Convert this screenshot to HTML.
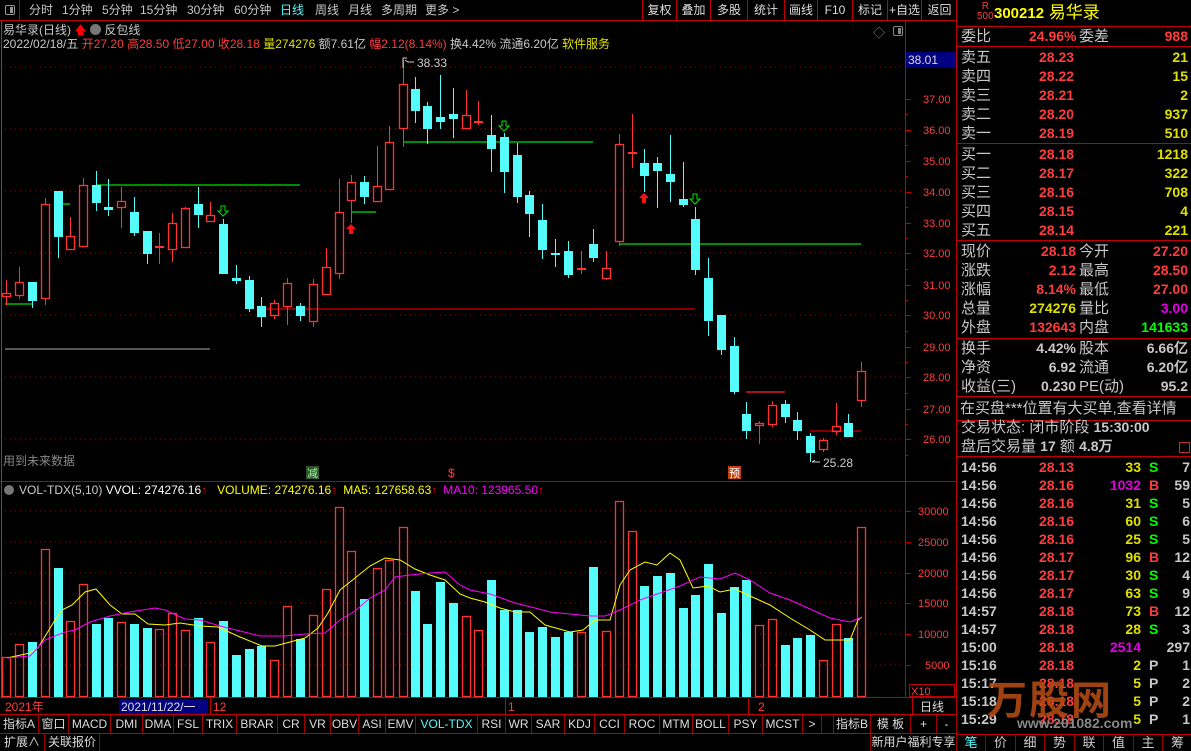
<!DOCTYPE html>
<html><head><meta charset="utf-8"><style>
*{margin:0;padding:0;box-sizing:border-box}
html,body{width:1191px;height:751px;overflow:hidden}
body{background:#000;position:relative;font-family:"Liberation Sans","Noto Sans CJK SC",sans-serif;color:#c8c8c8}
.a{position:absolute;white-space:nowrap}
.t{font-size:12px;line-height:20px;top:0}
.rp{position:absolute;left:957px;width:234px;font-size:15px}
.row{position:absolute;left:0;width:234px;height:19px;line-height:19px;white-space:nowrap}
.row span{position:absolute;top:0}
.num{font-family:"Liberation Sans",sans-serif;font-weight:bold;font-size:14px}
.red{color:#ff3c3c}.yel{color:#e0e000}.grn{color:#00ff00}.mag{color:#e000e0}.gry{color:#c8c8c8}
.tab{position:absolute;top:715px;height:18px;line-height:18px;font-size:12px;text-align:center;border-right:1px solid #a00000;color:#ddd;white-space:nowrap;overflow:hidden}
.btn{position:absolute;top:0;height:20px;line-height:20px;font-size:12px;text-align:center;border-left:1px solid #c00000;color:#ddd;white-space:nowrap}
.hl{position:absolute;height:1px;background:#c00000}
</style></head><body>

<!-- top bar -->
<div class="a" style="left:0;top:0;width:20px;height:20px;border-right:1px solid #c00000"></div>
<div class="a" style="left:5px;top:5px;width:10px;height:10px;border:1px solid #999;border-radius:2px"><div style="position:absolute;right:1px;top:1px;width:3px;height:6px;background:#999"></div></div>
<div class="a t" style="left:29px">分时</div>
<div class="a t" style="left:62px">1分钟</div>
<div class="a t" style="left:102px">5分钟</div>
<div class="a t" style="left:140px">15分钟</div>
<div class="a t" style="left:187px">30分钟</div>
<div class="a t" style="left:234px">60分钟</div>
<div class="a t" style="left:280px;color:#54fcfc">日线</div>
<div class="a t" style="left:315px">周线</div>
<div class="a t" style="left:348px">月线</div>
<div class="a t" style="left:381px">多周期</div>
<div class="a t" style="left:425px">更多 &gt;</div>
<div class="btn" style="left:642px;width:34px">复权</div>
<div class="btn" style="left:676px;width:34px">叠加</div>
<div class="btn" style="left:710px;width:37px">多股</div>
<div class="btn" style="left:747px;width:37px">统计</div>
<div class="btn" style="left:784px;width:33px">画线</div>
<div class="btn" style="left:817px;width:35px">F10</div>
<div class="btn" style="left:852px;width:35px">标记</div>
<div class="btn" style="left:887px;width:34px">+自选</div>
<div class="btn" style="left:921px;width:36px">返回</div>
<div class="hl" style="left:0;top:20px;width:957px"></div>

<!-- chart info -->
<div class="a" style="left:3px;top:22px;font-size:12px;line-height:16px">易华录(日线) <span style="color:#f00">🡅</span> <span style="display:inline-block;width:11px;height:11px;border-radius:6px;background:#777;vertical-align:-1px"></span> 反包线</div>
<div class="a" style="left:3px;top:36px;font-size:12px;line-height:16px">2022/02/18/五 <span class="red">开27.20 高28.50 低27.00 收28.18</span> <span class="yel">量274276</span> 额7.61亿 <span class="red">幅2.12(8.14%)</span> 换4.42% 流通6.20亿 <span class="yel">软件服务</span></div>
<div class="a" style="left:873px;top:24px;color:#888;font-size:12px">◇</div>
<div class="a" style="left:893px;top:26px;width:10px;height:10px;border:1px solid #888;border-radius:2px"><div style="position:absolute;right:1px;top:1px;width:3px;height:6px;background:#888"></div></div>

<svg class="a" style="left:0;top:0" width="957" height="751" id="ch">
<g stroke="#b00000" stroke-dasharray="1,4" stroke-width="1">
<line x1="5" y1="67" x2="905" y2="67"/><line x1="5" y1="129" x2="905" y2="129"/><line x1="5" y1="191" x2="905" y2="191"/><line x1="5" y1="253" x2="905" y2="253"/><line x1="5" y1="315" x2="905" y2="315"/><line x1="5" y1="377" x2="905" y2="377"/><line x1="5" y1="439" x2="905" y2="439"/>
<line x1="5" y1="511" x2="905" y2="511"/><line x1="5" y1="542" x2="905" y2="542"/><line x1="5" y1="573" x2="905" y2="573"/><line x1="5" y1="603" x2="905" y2="603"/><line x1="5" y1="634" x2="905" y2="634"/><line x1="5" y1="665" x2="905" y2="665"/>
</g>
<line x1="905.5" y1="21" x2="905.5" y2="697" stroke="#c00000"/>
<line x1="0" y1="481.5" x2="957" y2="481.5" stroke="#c00000"/>
<line x1="0" y1="697.5" x2="957" y2="697.5" stroke="#c00000"/>
<line x1="0" y1="714.5" x2="957" y2="714.5" stroke="#c00000"/>
<line x1="0" y1="733.5" x2="957" y2="733.5" stroke="#c00000"/>
<line x1="956.5" y1="0" x2="956.5" y2="751" stroke="#c00000"/>
<line x1="1.5" y1="21" x2="1.5" y2="697" stroke="#555"/>
<g id="ticks" stroke="#c00000"></g>
<g font-size="11" fill="#ff3c3c" font-family="Liberation Sans">
<text x="923" y="103">37.00</text><text x="923" y="134">36.00</text><text x="923" y="165">35.00</text><text x="923" y="196">34.00</text><text x="923" y="227">33.00</text><text x="923" y="257">32.00</text><text x="923" y="289">31.00</text><text x="923" y="319">30.00</text><text x="923" y="351">29.00</text><text x="923" y="381">28.00</text><text x="923" y="413">27.00</text><text x="923" y="443">26.00</text>
<text x="918" y="515">30000</text><text x="918" y="546">25000</text><text x="918" y="577">20000</text><text x="918" y="607">15000</text><text x="918" y="638">10000</text><text x="925" y="669">5000</text>
</g>
<rect x="906" y="52" width="50" height="16" fill="#000080"/>
<text x="908" y="64" font-size="12" fill="#ddd">38.01</text>
<rect x="909.5" y="684.5" width="45" height="12" fill="none" stroke="#c00000"/>
<text x="911" y="695" font-size="11" fill="#ff3c3c">X10</text>

<g stroke-width="1.3">
<line x1="96" y1="185" x2="300" y2="185" stroke="#00e000"/>
<line x1="5" y1="304" x2="32" y2="304" stroke="#00e000"/>
<line x1="57" y1="204" x2="70" y2="204" stroke="#00e000"/>
<line x1="261" y1="309" x2="695" y2="309" stroke="#d00000"/>
<line x1="5" y1="349" x2="210" y2="349" stroke="#888"/>
<line x1="351" y1="212" x2="376" y2="212" stroke="#00e000"/>
<line x1="403" y1="142" x2="593" y2="142" stroke="#00e000"/>
<line x1="619" y1="244" x2="861" y2="244" stroke="#00e000"/>
<line x1="746" y1="392" x2="785" y2="392" stroke="#ff2020"/>
<line x1="810" y1="431" x2="861" y2="431" stroke="#d00000"/>
</g>
<g id="cand"></g>
<g id="vol"></g>
<polyline fill="none" stroke="#ffff00" stroke-width="1" points="7,658 30,653 38,648 55,620 62,610 72,605 85,592 96,589 110,605 122,614 135,614 148,624 165,625 180,623 200,626 218,627 240,637 262,646 275,646 290,642 305,638 318,628 328,613 340,590 355,578 370,566 385,558 400,560 415,569 430,575 445,580 460,594 470,598 485,602 500,608 515,612 530,612 545,625 570,632 583,630 595,620 610,620 620,585 630,570 645,562 657,565 670,553 680,560 693,588 708,586 720,592 735,589 750,596 770,605 790,618 810,630 825,640 850,640 858,620 862,617"/>
<polyline fill="none" stroke="#ff00ff" stroke-width="1" points="7,658 30,656 45,640 65,632 75,630 90,622 110,616 130,612 155,608 165,610 185,619 200,620 220,626 240,631 260,636 285,636 305,634 325,633 340,620 355,611 370,598 385,590 395,577 410,575 430,573 445,572 460,585 470,590 490,594 515,603 535,608 550,612 590,616 605,616 620,610 640,600 660,593 680,586 700,577 720,579 735,573 750,580 770,593 790,600 810,609 830,618 850,622 862,617"/>

<path d="M351,224 l-5,5 h3 v5 h4 v-5 h3 z" fill="#ff1010"/>
<path d="M644,193 l-5,5 h3 v5 h4 v-5 h3 z" fill="#ff1010"/>
<g fill="none" stroke="#00e000"><path d="M221,206 h4 v5 h3 l-5,5 l-5,-5 h3 z"/><path d="M502,121 h4 v5 h3 l-5,5 l-5,-5 h3 z"/><path d="M693,194 h4 v5 h3 l-5,5 l-5,-5 h3 z"/></g>
<path d="M403,68 v-10 h4 M405,60 l3,2 h6" stroke="#ccc" fill="none"/>
<text x="417" y="67" font-size="12" fill="#ccc">38.33</text>
<path d="M812,462 h8 M812,462 l3,-2" stroke="#ccc" fill="none"/>
<text x="823" y="467" font-size="12" fill="#ccc">25.28</text>
<text x="3" y="465" font-size="12" fill="#888">用到未来数据</text>
<rect x="306" y="466" width="13" height="13" fill="#305030"/><text x="307" y="477" font-size="11" fill="#9f9">减</text>
<text x="448" y="477" font-size="12" fill="#ff3c3c">$</text>
<rect x="728" y="466" width="13" height="13" fill="#c04010"/><text x="729" y="477" font-size="11" fill="#fff">预</text>

<circle cx="9" cy="490" r="5" fill="#777"/>
<text x="19" y="494" font-size="12" fill="#ccc">VOL-TDX(5,10) <tspan fill="#fff">VVOL: 274276.16</tspan><tspan fill="#f00">↑</tspan><tspan fill="#ffff00" dx="10">VOLUME: 274276.16</tspan><tspan fill="#f00">↑</tspan><tspan fill="#ffff00" dx="6">MA5: 127658.63</tspan><tspan fill="#f00">↑</tspan><tspan fill="#ff00ff" dx="6">MA10: 123965.50</tspan><tspan fill="#f00">↑</tspan></text>

<text x="5" y="711" font-size="12" fill="#ff3c3c">2021年</text>
<rect x="119" y="699" width="89" height="15" fill="#000080"/>
<text x="121" y="711" font-size="12" fill="#ddd">2021/11/22/一</text>
<line x1="210.5" y1="698" x2="210.5" y2="714" stroke="#c00000"/>
<text x="213" y="711" font-size="12" fill="#ff3c3c">12</text>
<line x1="505.5" y1="698" x2="505.5" y2="714" stroke="#c00000"/>
<text x="508" y="711" font-size="12" fill="#ff3c3c">1</text>
<line x1="748.5" y1="698" x2="748.5" y2="714" stroke="#c00000"/>
<text x="758" y="711" font-size="12" fill="#ff3c3c">2</text>
<line x1="912.5" y1="698" x2="912.5" y2="714" stroke="#c00000"/>
<text x="920" y="711" font-size="12" fill="#ddd">日线</text>
</svg>

<div class="tab" style="left:0;width:39px">指标A</div>
<div class="tab" style="left:39px;width:30px">窗口</div>
<div class="tab" style="left:69px;width:42px">MACD</div>
<div class="tab" style="left:111px;width:32px">DMI</div>
<div class="tab" style="left:143px;width:31px">DMA</div>
<div class="tab" style="left:174px;width:29px">FSL</div>
<div class="tab" style="left:203px;width:34px">TRIX</div>
<div class="tab" style="left:237px;width:41px">BRAR</div>
<div class="tab" style="left:278px;width:27px">CR</div>
<div class="tab" style="left:305px;width:26px">VR</div>
<div class="tab" style="left:331px;width:28px">OBV</div>
<div class="tab" style="left:359px;width:27px">ASI</div>
<div class="tab" style="left:386px;width:30px">EMV</div>
<div class="tab" style="left:416px;width:62px;color:#54fcfc">VOL-TDX</div>
<div class="tab" style="left:478px;width:28px">RSI</div>
<div class="tab" style="left:506px;width:26px">WR</div>
<div class="tab" style="left:532px;width:33px">SAR</div>
<div class="tab" style="left:565px;width:30px">KDJ</div>
<div class="tab" style="left:595px;width:30px">CCI</div>
<div class="tab" style="left:625px;width:35px">ROC</div>
<div class="tab" style="left:660px;width:33px">MTM</div>
<div class="tab" style="left:693px;width:36px">BOLL</div>
<div class="tab" style="left:729px;width:34px">PSY</div>
<div class="tab" style="left:763px;width:40px">MCST</div>
<div class="tab" style="left:803px;width:19px">&gt;</div>
<div class="tab" style="left:833px;width:38px;border-left:1px solid #a00000">指标B</div>
<div class="tab" style="left:871px;width:40px">模 板</div>
<div class="tab" style="left:911px;width:26px">+</div>
<div class="tab" style="left:937px;width:20px">-</div>
<div class="tab" style="left:0;top:734px;width:45px;height:17px;line-height:17px">扩展∧</div>
<div class="tab" style="left:45px;top:734px;width:55px;height:17px;line-height:17px">关联报价</div>
<div class="tab" style="left:870px;top:734px;width:87px;height:17px;line-height:17px;border-left:1px solid #a00000">新用户福利专享</div>

<div class="rp" style="top:0;height:751px">
<div class="a" style="left:20px;top:2px;font-size:10px;color:#ff3c3c;line-height:10px;text-align:center">R<br>500</div>
<div class="a" style="left:37px;top:2px;font-size:17px;color:#ffff00;line-height:22px"><b style="font-size:15px">300212</b> 易华录</div>
<div class="hl" style="left:0;top:26px;width:234px"></div>
<div class="row" style="top:27px"><span style="left:4px">委比</span><span class="num red" style="left:72px">24.96%</span><span style="left:122px">委差</span><span class="num red" style="right:3px">988</span></div>
<div class="hl" style="left:0;top:46px;width:234px"></div>
<div id="ob"></div>
<div class="hl" style="left:0;top:143px;width:234px"></div>
<div class="hl" style="left:0;top:240px;width:234px"></div>
<div class="row" style="top:242px"><span style="left:4px">现价</span><span class="num red" style="right:115px">28.18</span><span style="left:122px">今开</span><span class="num red" style="right:3px">27.20</span></div>
<div class="row" style="top:261px"><span style="left:4px">涨跌</span><span class="num red" style="right:115px">2.12</span><span style="left:122px">最高</span><span class="num red" style="right:3px">28.50</span></div>
<div class="row" style="top:280px"><span style="left:4px">涨幅</span><span class="num red" style="right:115px">8.14%</span><span style="left:122px">最低</span><span class="num red" style="right:3px">27.00</span></div>
<div class="row" style="top:299px"><span style="left:4px">总量</span><span class="num yel" style="right:115px">274276</span><span style="left:122px">量比</span><span class="num mag" style="right:3px">3.00</span></div>
<div class="row" style="top:318px"><span style="left:4px">外盘</span><span class="num red" style="right:115px">132643</span><span style="left:122px">内盘</span><span class="num grn" style="right:3px">141633</span></div>
<div class="hl" style="left:0;top:338px;width:234px"></div>
<div class="row" style="top:339px"><span style="left:4px">换手</span><span class="num" style="right:115px">4.42%</span><span style="left:122px">股本</span><span class="num" style="right:3px">6.66亿</span></div>
<div class="row" style="top:358px"><span style="left:4px">净资</span><span class="num" style="right:115px">6.92</span><span style="left:122px">流通</span><span class="num" style="right:3px">6.20亿</span></div>
<div class="row" style="top:377px"><span style="left:4px">收益(三)</span><span class="num" style="right:115px">0.230</span><span style="left:122px">PE(动)</span><span class="num" style="right:3px">95.2</span></div>
<div class="hl" style="left:0;top:396px;width:234px"></div>
<div class="row" style="top:399px"><span style="left:3px">在买盘***位置有大买单,查看详情</span></div>
<div class="hl" style="left:0;top:420px;width:234px"></div>
<div class="row" style="top:418px"><span style="left:4px">交易状态: 闭市阶段 <b class="num">15:30:00</b></span></div>
<div class="row" style="top:437px"><span style="left:4px">盘后交易量 <b class="num">17</b> 额 <b class="num">4.8万</b></span></div>
<div class="a" style="left:222px;top:442px;width:11px;height:11px;border:1px solid #c03030"></div>
<div class="hl" style="left:0;top:456px;width:234px"></div>
<div id="tk"></div>
<div class="a" style="left:30px;top:668px;font-size:40px;font-weight:bold;color:#b14a14;letter-spacing:2px;opacity:.9">万股网</div>
<div class="a" style="left:60px;top:715px;font-size:14px;font-weight:bold;color:#888">www.201082.com</div>
<div class="hl" style="left:0;top:734px;width:234px"></div>
<div id="bt"></div>
</div>

<script>
var N='http://www.w3.org/2000/svg';
function el(p,t,a){var e=document.createElementNS(N,t);for(var k in a)e.setAttribute(k,a[k]);p.appendChild(e);return e;}
var C=[[6,293,297,280,305,'r'],[19,282,296,267,299,'r'],[32,282,301,282,308,'c'],[45,204,299,198,305,'r'],[58,191,237,191,258,'c'],[70,236,250,217,250,'r'],[83,185,247,178,247,'r'],[96,185,203,171,211,'c'],[108,207,210,179,216,'c'],[121,201,208,187,228,'r'],[134,212,233,197,236,'c'],[147,231,254,231,264,'c'],[159,246,248,233,264,'r'],[172,223,250,213,262,'r'],[185,208,248,207,248,'r'],[198,204,215,187,228,'c'],[210,215,222,202,222,'r'],[223,224,274,219,274,'c'],[236,278,281,265,284,'c'],[249,280,309,276,312,'c'],[261,306,317,297,327,'c'],[274,303,316,300,319,'r'],[287,283,307,278,325,'r'],[300,306,316,303,321,'c'],[313,284,322,279,327,'r'],[326,267,295,248,295,'r'],[339,212,274,179,279,'r'],[351,182,201,175,223,'r'],[364,182,197,176,204,'c'],[377,186,202,146,202,'r'],[389,142,190,126,190,'r'],[403,84,129,60,147,'r'],[415,89,111,77,123,'c'],[427,106,129,102,144,'c'],[440,117,122,75,129,'c'],[453,114,119,88,138,'c'],[466,115,129,90,129,'r'],[478,121,122,101,125,'r'],[491,135,149,115,172,'c'],[504,137,172,133,193,'c'],[517,155,197,143,203,'c'],[529,195,214,191,237,'c'],[542,220,250,204,259,'c'],[555,253,254,239,267,'c'],[568,251,275,241,278,'c'],[581,268,270,251,274,'r'],[593,244,258,229,262,'c'],[606,268,279,251,280,'r'],[619,144,242,134,246,'r'],[632,152,153,114,168,'r'],[644,163,176,149,192,'c'],[657,163,171,157,208,'c'],[670,174,182,135,202,'c'],[683,199,205,162,207,'c'],[695,219,270,207,275,'c'],[708,278,321,258,336,'c'],[721,315,350,315,355,'c'],[734,346,392,337,394,'c'],[746,414,431,402,439,'c'],[759,423,426,421,444,'r'],[772,405,425,401,427,'r'],[785,404,417,400,423,'c'],[797,420,431,412,440,'c'],[810,436,453,433,462,'c'],[823,440,450,438,452,'r'],[836,426,432,403,435,'r'],[848,423,437,414,437,'c'],[861,371,401,362,407,'r']];
var g=document.getElementById('cand');
C.forEach(function(c){var x=c[0],col=c[5]=='r'?'#ff3232':'#54fcfc';
 if(c[5]=='r'){el(g,'line',{x1:x+.5,y1:c[3],x2:x+.5,y2:c[1],stroke:col});el(g,'line',{x1:x+.5,y1:c[2],x2:x+.5,y2:c[4],stroke:col});
  if(c[2]-c[1]<3)el(g,'rect',{x:x-4,y:c[1],width:9,height:2,fill:col});else el(g,'rect',{x:x-3.5,y:c[1]+.5,width:8,height:c[2]-c[1]-1,fill:'none',stroke:col,'stroke-width':1.3});}
 else{el(g,'line',{x1:x+.5,y1:c[3],x2:x+.5,y2:c[4],stroke:col});el(g,'rect',{x:x-4,y:c[1],width:9,height:Math.max(2,c[2]-c[1]),fill:col});}});
var V=[[6,657,'r'],[19,644,'r'],[32,642,'c'],[45,549,'r'],[58,568,'c'],[70,621,'r'],[83,584,'r'],[96,624,'c'],[108,618,'c'],[121,622,'r'],[134,624,'c'],[147,628,'c'],[159,629,'r'],[172,613,'r'],[185,630,'r'],[198,618,'c'],[210,642,'r'],[223,621,'c'],[236,655,'c'],[249,649,'c'],[261,646,'c'],[274,660,'r'],[287,606,'r'],[300,639,'c'],[313,615,'r'],[326,589,'r'],[339,507,'r'],[351,551,'r'],[364,599,'c'],[377,568,'r'],[389,560,'r'],[403,527,'r'],[415,591,'c'],[427,624,'c'],[440,582,'c'],[453,603,'c'],[466,616,'r'],[478,630,'r'],[491,580,'c'],[504,610,'c'],[517,610,'c'],[529,632,'c'],[542,627,'c'],[555,637,'c'],[568,632,'c'],[581,632,'r'],[593,567,'c'],[606,631,'r'],[619,501,'r'],[632,531,'r'],[644,586,'c'],[657,576,'c'],[670,573,'c'],[683,608,'c'],[695,595,'c'],[708,564,'c'],[721,613,'c'],[734,587,'c'],[746,580,'c'],[759,625,'r'],[772,619,'r'],[785,645,'c'],[797,638,'c'],[810,635,'c'],[823,660,'r'],[836,624,'r'],[848,638,'c'],[861,527,'r']];
var gv=document.getElementById('vol');
V.forEach(function(v){var x=v[0];if(v[2]=='r')el(gv,'rect',{x:x-3.5,y:v[1]+.5,width:8,height:696-v[1],fill:'none',stroke:'#ff3232','stroke-width':1.3});else el(gv,'rect',{x:x-4,y:v[1],width:9,height:697-v[1],fill:'#54fcfc'});});
var tk=document.getElementById('ticks');
[99,130,161,192,223,253,285,315,347,377,409,439,511,542,573,603,634,665].forEach(function(y){el(tk,'line',{x1:905,y1:y+.5,x2:911,y2:y+.5});});
for(var y=114;y<480;y+=31)el(tk,'line',{x1:905,y1:y+.5,x2:908,y2:y+.5});
var ob='',names=['卖五','卖四','卖三','卖二','卖一','买一','买二','买三','买四','买五'],pr=['28.23','28.22','28.21','28.20','28.19','28.18','28.17','28.16','28.15','28.14'],q=['21','15','2','937','510','1218','322','708','4','221'];
for(var i=0;i<10;i++){var t=48+i*19+(i>=5?2:0);ob+='<div class="row" style="top:'+t+'px"><span style="left:4px">'+names[i]+'</span><span class="num red" style="left:82px">'+pr[i]+'</span><span class="num yel" style="right:3px">'+q[i]+'</span></div>';}
document.getElementById('ob').innerHTML=ob;
var T=[['14:56','28.13','33','S','7','yel'],['14:56','28.16','1032','B','59','mag'],['14:56','28.16','31','S','5','yel'],['14:56','28.16','60','S','6','yel'],['14:56','28.16','25','S','5','yel'],['14:56','28.17','96','B','12','yel'],['14:56','28.17','30','S','4','yel'],['14:56','28.17','63','S','9','yel'],['14:57','28.18','73','B','12','yel'],['14:57','28.18','28','S','3','yel'],['15:00','28.18','2514','','297','mag'],['15:16','28.18','2','P','1','yel'],['15:17','28.18','5','P','2','yel'],['15:18','28.18','5','P','2','yel'],['15:29','28.18','5','P','1','yel']];
var s='';T.forEach(function(r,i){var t=458+i*18,bc=r[3]=='S'?'grn':(r[3]=='B'?'red':'gry');
s+='<div class="row" style="top:'+t+'px;height:18px;line-height:18px"><span class="num" style="left:4px">'+r[0]+'</span><span class="num red" style="left:82px">'+r[1]+'</span><span class="num '+r[5]+'" style="right:50px">'+r[2]+'</span><span class="num '+bc+'" style="left:192px">'+r[3]+'</span><span class="num gry" style="right:1px">'+r[4]+'</span></div>';});
document.getElementById('tk').innerHTML=s;
var B=['笔','价','细','势','联','值','主','筹'],bs='';
B.forEach(function(b,i){bs+='<div class="a" style="left:'+(i*29.5)+'px;top:735px;width:29px;height:16px;line-height:16px;font-size:13px;text-align:center;border-right:1px solid #a00000;color:'+(i==0?'#54fcfc':'#ccc')+'">'+b+'</div>';});
document.getElementById('bt').innerHTML=bs;
</script>
</body></html>
